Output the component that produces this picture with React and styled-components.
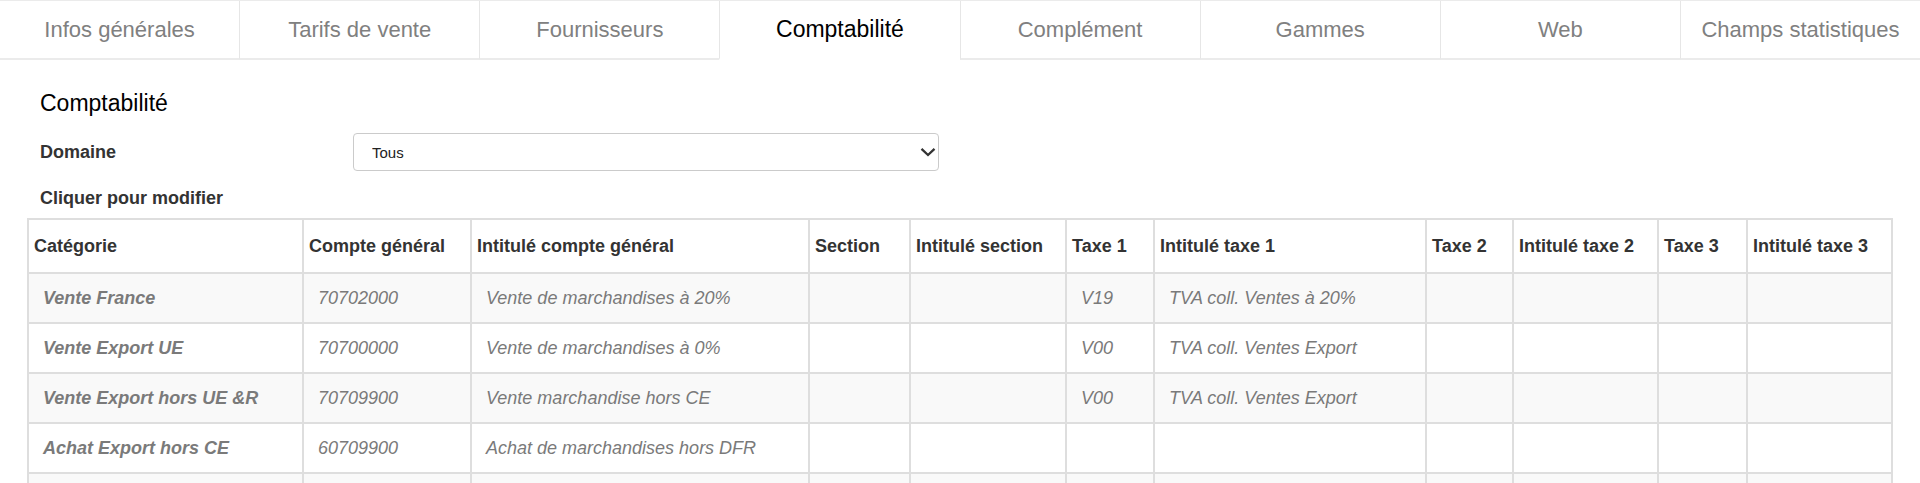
import styled, { createGlobalStyle } from 'styled-components'

const GlobalStyle = createGlobalStyle`
    html, body {
        margin: 0;
        padding: 0;
        background: #fff;
        overflow: hidden;
    }
    body {
        font-family: "Liberation Sans", Arial, Helvetica, sans-serif;
        color: #333;
    }
`

const Tabs = styled.nav`
    display: flex;
    border-top: 1px solid #ebebeb;
`

const Tab = styled.div`
    flex: 1;
    height: 57px;
    display: flex;
    align-items: center;
    justify-content: center;
    font-size: ${(p) => (p.$active ? '23px' : '22px')};
    color: ${(p) => (p.$active ? '#000' : '#808080')};
    border-bottom: 2px solid ${(p) => (p.$active ? '#fff' : '#ebebeb')};
    border-left: 1px solid #e6e6e6;
    cursor: pointer;

    &:first-child {
        border-left: none;
    }
`

const Content = styled.div`
    padding: 29px 40px 0;
`

const Title = styled.h2`
    margin: 0;
    font-size: 23px;
    font-weight: normal;
    line-height: 28px;
    color: #000;
`

const FieldRow = styled.div`
    display: flex;
    align-items: center;
    margin-top: 16px;
`

const Label = styled.label`
    width: 313px;
    font-size: 18px;
    font-weight: bold;
    line-height: 22px;
    color: #333;
`

const SelectBox = styled.div`
    position: relative;
    width: 586px;
`

const Select = styled.select`
    appearance: none;
    width: 100%;
    height: 38px;
    box-sizing: border-box;
    padding: 0 36px 0 18px;
    border: 1px solid #cbcbcb;
    border-radius: 4px;
    background: #fff;
    font-family: inherit;
    font-size: 15px;
    color: #222;
`

const Chevron = styled.svg`
    position: absolute;
    right: 0;
    top: 14px;
    pointer-events: none;
`

const Hint = styled.div`
    margin-top: 16px;
    font-size: 18px;
    font-weight: bold;
    line-height: 22px;
    color: #333;
`

const Table = styled.table`
    margin: 9px -13px 0;
    width: 1866px;
    table-layout: fixed;
    border-collapse: separate;
    border-spacing: 0;
    border-top: 2px solid #dedede;
    border-left: 2px solid #dedede;
`

const Th = styled.th`
    box-sizing: border-box;
    padding: 15px 5px;
    text-align: left;
    font-size: 18px;
    line-height: 22px;
    font-weight: bold;
    color: #333;
    white-space: nowrap;
    overflow: hidden;
    border-right: 2px solid #dedede;
    border-bottom: 2px solid #dedede;
`

const Tr = styled.tr`
    background: ${(p) => (p.$striped ? '#f9f9f9' : '#fff')};
`

const Td = styled.td`
    box-sizing: border-box;
    padding: 13px 14px;
    font-size: 18px;
    line-height: 22px;
    font-style: italic;
    font-weight: ${(p) => (p.$strong ? 'bold' : 'normal')};
    color: #7a7a7a;
    white-space: nowrap;
    overflow: hidden;
    border-right: 2px solid #dedede;
    border-bottom: 2px solid #dedede;
`

const tabs = [
    'Infos générales',
    'Tarifs de vente',
    'Fournisseurs',
    'Comptabilité',
    'Complément',
    'Gammes',
    'Web',
    'Champs statistiques',
]

const columns = [
    { label: 'Catégorie', width: 275 },
    { label: 'Compte général', width: 168 },
    { label: 'Intitulé compte général', width: 338 },
    { label: 'Section', width: 101 },
    { label: 'Intitulé section', width: 156 },
    { label: 'Taxe 1', width: 88 },
    { label: 'Intitulé taxe 1', width: 272 },
    { label: 'Taxe 2', width: 87 },
    { label: 'Intitulé taxe 2', width: 145 },
    { label: 'Taxe 3', width: 89 },
    { label: 'Intitulé taxe 3', width: 145 },
]

const blank = Array(11).fill('\u00a0')

const rows = [
    ['Vente France', '70702000', 'Vente de marchandises à 20%', '', '', 'V19', 'TVA coll. Ventes à 20%', '', '', '', ''],
    ['Vente Export UE', '70700000', 'Vente de marchandises à 0%', '', '', 'V00', 'TVA coll. Ventes Export', '', '', '', ''],
    ['Vente Export hors UE &R', '70709900', 'Vente marchandise hors CE', '', '', 'V00', 'TVA coll. Ventes Export', '', '', '', ''],
    ['Achat Export hors CE', '60709900', 'Achat de marchandises hors DFR', '', '', '', '', '', '', '', ''],
    blank,
]

const App = () => {
    return (
        <>
            <GlobalStyle />
            <Tabs>
                {tabs.map((t) => (
                    <Tab key={t} $active={t === 'Comptabilité'}>{t}</Tab>
                ))}
            </Tabs>
            <Content>
                <Title>Comptabilité</Title>
                <FieldRow>
                    <Label>Domaine</Label>
                    <SelectBox>
                        <Select defaultValue="tous">
                            <option value="tous">Tous</option>
                            <option value="ventes">Ventes</option>
                            <option value="achats">Achats</option>
                        </Select>
                        <Chevron width="22" height="10" viewBox="0 0 22 10">
                            <polyline points="4.5,1.8 11,8 17.5,1.8" fill="none" stroke="#333" strokeWidth="2.3" />
                        </Chevron>
                    </SelectBox>
                </FieldRow>
                <Hint>Cliquer pour modifier</Hint>
                <Table>
                    <colgroup>
                        {columns.map((c) => (
                            <col key={c.label} style={{ width: c.width }} />
                        ))}
                    </colgroup>
                    <thead>
                        <tr>
                            {columns.map((c) => (
                                <Th key={c.label}>{c.label}</Th>
                            ))}
                        </tr>
                    </thead>
                    <tbody>
                        {rows.map((r, i) => (
                            <Tr key={i} $striped={i % 2 === 0}>
                                {r.map((v, j) => (
                                    <Td key={j} $strong={j === 0}>{v}</Td>
                                ))}
                            </Tr>
                        ))}
                    </tbody>
                </Table>
            </Content>
        </>
    )
}

export default App
